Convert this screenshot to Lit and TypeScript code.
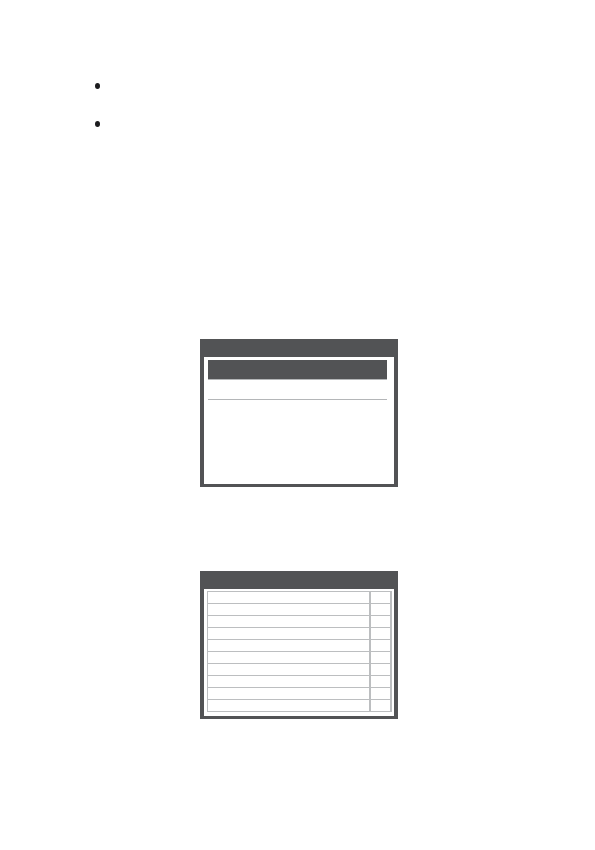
import { LitElement, html, css } from "lit";
import { customElement } from "lit/decorators.js";

@customElement("panel-frame")
export class PanelFrame extends LitElement {
  static styles = css`
    :host {
      display: block;
      box-sizing: border-box;
      width: 198px;
      max-width: 100%;
      background: #fff;
      border: solid #525355;
      border-width: 0 4px 3px;
    }
    .title {
      height: 18px;
      background: #525355;
    }
    .body {
      display: flow-root;
      min-height: 127px;
    }
  `;

  render() {
    return html`
      <div class="title"></div>
      <div class="body"><slot></slot></div>
    `;
  }
}

@customElement("app-root")
export class AppRoot extends LitElement {
  static styles = css`
    :host {
      display: block;
      background: #fff;
      color: #1c1c1e;
      font-family: "Liberation Sans", Arial, sans-serif;
    }
    .page {
      box-sizing: border-box;
      min-height: 100vh;
      padding: 83px 92px 48px 95px;
      display: flex;
      flex-direction: column;
      align-items: center;
    }
    .notes {
      align-self: stretch;
      margin: 0 0 212px;
      padding: 0;
      list-style: none;
      display: flex;
      flex-direction: column;
      gap: 32px;
    }
    .note {
      display: flex;
    }
    .note::before {
      content: "";
      width: 5px;
      height: 6px;
      border-radius: 50%;
      background: currentColor;
    }
    .panels {
      display: flex;
      flex-direction: column;
      gap: 84px;
    }
    .menu {
      margin: 3px 7px 0 4px;
      padding: 0;
      list-style: none;
    }
    .item {
      box-sizing: border-box;
      height: 20px;
      border-bottom: 1px solid #b4b6b8;
    }
    .selected {
      background: #525355;
    }
    .settings {
      width: 185px;
      margin: 2px 2px 4px 3px;
      table-layout: fixed;
      border-collapse: separate;
      border-spacing: 0;
      border: solid #bcbec0;
      border-width: 1px 0 0 1px;
    }
    .name,
    .value {
      box-sizing: border-box;
      height: 12px;
      padding: 0;
      border: solid #bcbec0;
      border-width: 0 2px 1px 0;
    }
    .value {
      width: 21px;
    }
  `;

  private rows = Array.from({ length: 10 });

  render() {
    return html`
      <main class="page">
        <ul class="notes">
          <li class="note"></li>
          <li class="note"></li>
        </ul>
        <div class="panels">
          <panel-frame>
            <ul class="menu">
              <li class="item selected"></li>
              <li class="item"></li>
            </ul>
          </panel-frame>
          <panel-frame>
            <table class="settings">
              <tbody>
                ${this.rows.map(
                  () => html`<tr>
                    <td class="name"></td>
                    <td class="value"></td>
                  </tr>`,
                )}
              </tbody>
            </table>
          </panel-frame>
        </div>
      </main>
    `;
  }
}
